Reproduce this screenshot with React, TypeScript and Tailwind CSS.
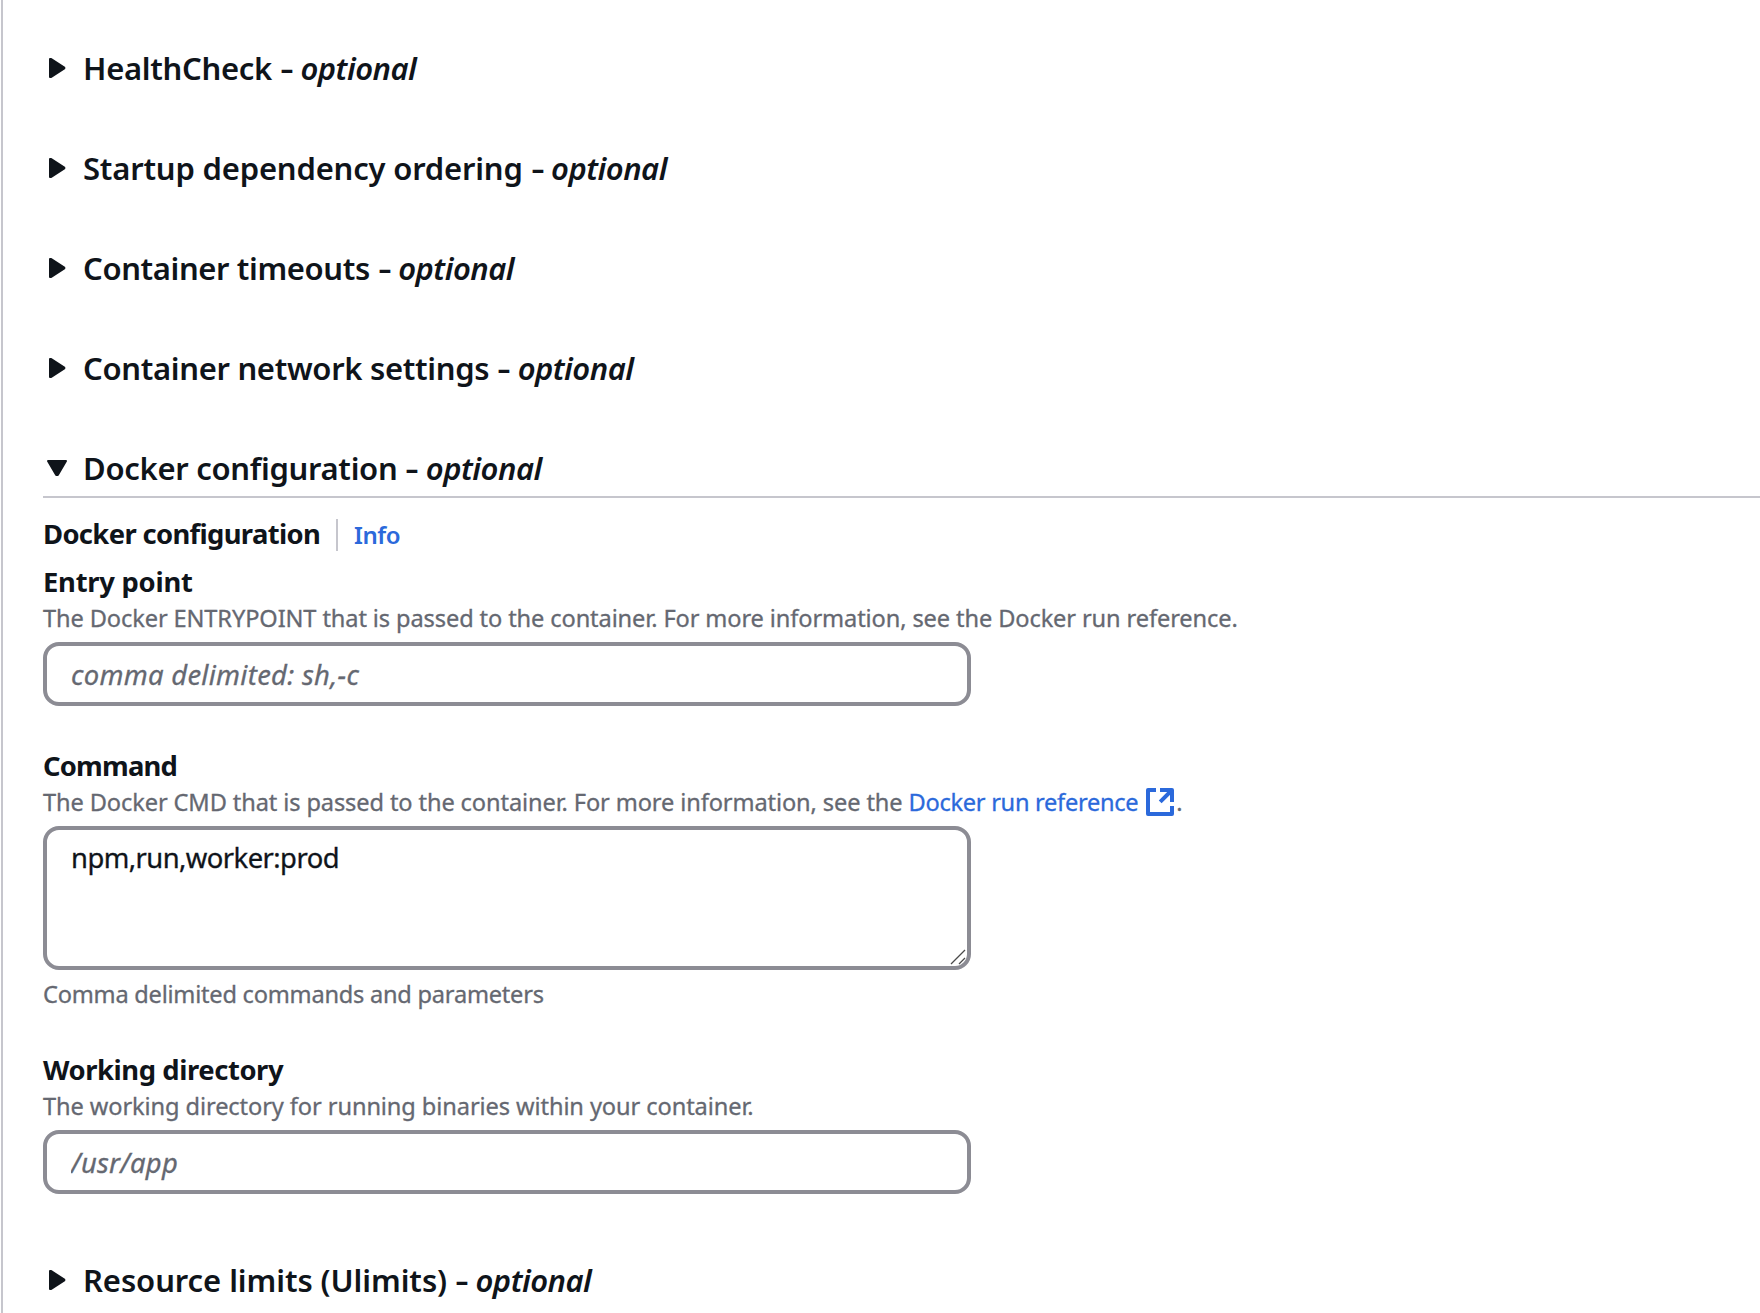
import type { ReactNode } from "react";

function Caret({ open }: { open?: boolean }) {
  return (
    <svg width="28" height="40" viewBox="0 0 28 40" className="shrink-0" fill="#0f141a" stroke="#0f141a" strokeWidth="2" strokeLinejoin="round">
      {open ? <path d="M5 13H23L14.8 27H13.2Z" /> : <path d="M7 11L8.2 11L21.3 19.5V20.5L8.2 29H7Z" />}
    </svg>
  );
}

function SectionHeader({ title, tracking, open }: { title: string; tracking: string; open?: boolean }) {
  return (
    <h2 className="flex h-10 items-center text-[31px] leading-10 font-semibold whitespace-nowrap">
      <Caret open={open} />
      <span className={`ml-3 ${tracking}`}>{title}</span>
      <span className="ml-[10px] scale-x-[1.35]">-</span>
      <i className="ml-[8.5px] tracking-[-0.5px]">optional</i>
    </h2>
  );
}

function Label({ children, className = "" }: { children: ReactNode; className?: string }) {
  return <div className={`h-9 w-fit text-[27.4px] leading-[38px] font-bold whitespace-nowrap ${className}`}>{children}</div>;
}

function Hint({ children, className = "" }: { children: ReactNode; className?: string }) {
  return <div className={`h-8 w-fit text-[23.6px] leading-8 whitespace-nowrap text-[#656871] [-webkit-text-stroke:0.3px] ${className}`}>{children}</div>;
}

function ExternalIcon() {
  return (
    <svg width="28" height="28" viewBox="0 0 28 28" fill="none" stroke="#2b69db" strokeWidth="4" strokeLinejoin="round">
      <path d="M10 2H2V26H26V18" />
      <path d="M14 2H26V14M26 2L14.2 13.8" />
    </svg>
  );
}

const field = "block w-[928px] rounded-2xl border-4 border-[#8c8c94] bg-white pl-6 text-[27.4px] outline-none [-webkit-text-stroke:0.3px] placeholder:text-[#656871] placeholder:italic placeholder:opacity-100";

export default function App() {
  return (
    <div className="ml-px h-[1313px] overflow-hidden border-l-2 border-[#c6c6cd] bg-white pl-10 font-['Noto_Sans',sans-serif] text-[#0f141a]">
      <div className="flex flex-col gap-[60px] pt-12">
        <SectionHeader title="HealthCheck" tracking="tracking-[-0.3px]" />
        <SectionHeader title="Startup dependency ordering" tracking="tracking-[-0.19px]" />
        <SectionHeader title="Container timeouts" tracking="tracking-[-0.38px]" />
        <SectionHeader title="Container network settings" tracking="tracking-[-0.32px]" />
        <SectionHeader title="Docker configuration" tracking="tracking-[-0.3px]" open />
      </div>

      <div className="mt-2 border-t-2 border-[#c6c6cd] pt-[17px]">
        <div className="flex h-9">
          <Label className="tracking-[-0.65px]">Docker configuration</Label>
          <span className="ml-4 h-8 w-[2px] self-end bg-[#c6c6cd]" />
          <a className="ml-4 text-[24px] leading-10 font-semibold tracking-[-0.5px] text-[#2b69db]">Info</a>
        </div>

        <Label className="mt-3 tracking-[-0.25px]">Entry point</Label>
        <Hint className="mt-[3px] tracking-[-0.11px]">
          The Docker ENTRYPOINT that is passed to the container. For more information, see the Docker run reference.
        </Hint>
        <input className={`${field} mt-2 h-16 placeholder:tracking-[0.3px]`} placeholder="comma delimited: sh,-c" />

        <Label className="mt-[41px] tracking-[-0.8px]">Command</Label>
        <Hint className="mt-[3px] flex">
          <span className="tracking-[-0.11px]">The Docker CMD that is passed to the container. For more information, see the</span>
          <a className="ml-[6px] tracking-[-0.28px] text-[#2b69db]">Docker run reference</a>
          <span className="mt-[2px] ml-2 h-7">
            <ExternalIcon />
          </span>
          <span className="ml-[2px]">.</span>
        </Hint>
        <div className="relative mt-2 w-[928px]">
          <textarea className={`${field} h-36 resize-none pt-[10px] leading-9 tracking-[-0.55px]`} defaultValue="npm,run,worker:prod" />
          <svg className="absolute right-[5px] bottom-[5px]" width="16" height="16" viewBox="0 0 16 16" fill="none" stroke="#4a4a4a" strokeWidth="1.3">
            <path d="M1 15L15 1M9 15L15 9" />
          </svg>
        </div>
        <Hint className="mt-2 tracking-[-0.23px]">Comma delimited commands and parameters</Hint>

        <Label className="mt-[41px] tracking-[-0.42px]">Working directory</Label>
        <Hint className="mt-[3px] tracking-[-0.09px]">The working directory for running binaries within your container.</Hint>
        <input className={`${field} mt-2 h-16 placeholder:tracking-[0.2px]`} placeholder="/usr/app" />
      </div>

      <div className="mt-[66px]">
        <SectionHeader title="Resource limits (Ulimits)" tracking="tracking-[-0.08px]" />
      </div>
    </div>
  );
}
